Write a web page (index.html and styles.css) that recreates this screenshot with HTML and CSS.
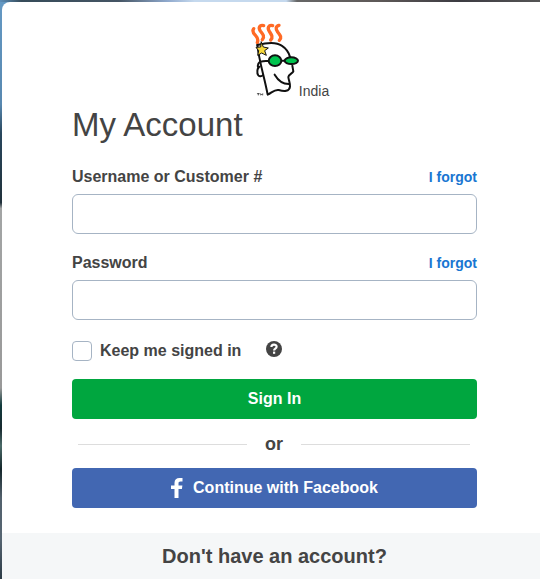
FILE: index.html
```html
<!DOCTYPE html>
<html lang="en">
<head>
    <meta charset="UTF-8">
    <meta name="viewport" content="width=device-width, initial-scale=1.0">
    <title>My Account - Sign In</title>
    <link rel="stylesheet" href="styles.css">
</head>
<body>
    <main class="card">
        <div class="card-body">
            <!-- Logo -->
            <div class="logo">
                <svg class="logo-face" viewBox="51 36 153 228" fill="none" stroke="#111" stroke-width="6" stroke-linecap="round" stroke-linejoin="round" aria-hidden="true">
                    <g stroke="#ff6a25" stroke-width="10">
                        <path d="M68 56C62 64 67 70 74 77C82 85 82 90 79 98"/>
                        <path d="M98 47C86 44 81 53 88 63C96 73 102 80 94 89"/>
                        <path d="M125 47C113 44 108 53 115 64C122 75 127 82 119 90"/>
                        <path d="M144 46C134 49 133 56 140 66C149 77 153 83 145 91"/>
                    </g>
                    <path d="M79 105C110 97 136 95 152 107C166 116 174 128 178 143"/>
                    <path d="M79 105C84 153 101 204 110 254C124 247 130 238 143 240C160 245 175 245 177 230C178 221 173 211 172 201C173 193 185 190 187 184L184 167"/>
                    <path d="M131 194C140 209 151 222 173 222"/>
                    <path d="M112 153C98 152 86 153 82 161C80 165 80 170 82 175M86 170C78 173 77 190 82 196C86 200 92 199 95 196M151 152H160"/>
                    <ellipse cx="132" cy="152" rx="19" ry="16" fill="#00c34e"/>
                    <ellipse cx="181" cy="152" rx="20" ry="10" fill="#00c34e"/>
                    <path d="M91 96L97 111L112 114L101 122L106 136L92 129L80 136L83 122L75 112L88 111Z" fill="#f8d93b" stroke-width="3"/>
                    <path d="M79 251H85M82 251V255M89 255V251L92 254L95 251V255" stroke-width="2"/>
                </svg>
                <span class="logo-country">India</span>
            </div>

            <h1>My Account</h1>

            <!-- Sign in form -->
            <form>
                <div class="field">
                    <div class="field-head">
                        <label for="username">Username or Customer #</label>
                        <a href="#">I forgot</a>
                    </div>
                    <input class="form-control" type="text" id="username">
                </div>
                <div class="field">
                    <div class="field-head">
                        <label for="password">Password</label>
                        <a href="#">I forgot</a>
                    </div>
                    <input class="form-control" type="password" id="password">
                </div>

                <div class="remember">
                    <input type="checkbox" id="remember">
                    <label for="remember">Keep me signed in</label>
                    <button type="button" class="help" aria-label="Help">
                        <svg viewBox="0 0 16 16" aria-hidden="true">
                            <circle cx="8" cy="8" r="8" fill="#444"/>
                            <path d="M5.4 6C5.4 2.8 10.6 2.8 10.6 5.8C10.6 7.8 8.1 7.5 8.1 9.4" fill="none" stroke="#fff" stroke-width="2.2"/>
                            <rect x="7" y="10.6" width="2.2" height="2.2" fill="#fff"/>
                        </svg>
                    </button>
                </div>

                <button type="submit" class="btn btn-signin">Sign In</button>
                <div class="divider">or</div>
                <button type="button" class="btn btn-facebook">
                    <svg viewBox="0 0 12 20" aria-hidden="true">
                        <path d="M3.5 20V11H0V7.5H3.5V5C3.5 1.7 5.4 0 8.5 0H11.5V3.5H9.5C8 3.5 7.5 4.2 7.5 5.4V7.5H11.4L10.9 11H7.5V20Z" fill="#fff"/>
                    </svg>
                    Continue with Facebook
                </button>
            </form>
        </div>

        <div class="card-footer">
            <h2>Don't have an account?</h2>
        </div>
    </main>
</body>
</html>
```

FILE: styles.css
```css
* {
    box-sizing: border-box;
}

body {
    margin: 0;
    padding: 2px 0 0 2px;
    min-height: 100vh;
    display: flex;
    font-family: "Liberation Sans", Arial, sans-serif;
    font-size: 16px;
    line-height: 24px;
    color: #444;
    background:
        linear-gradient(90deg, #5b8db8 0, #364b59 4%, #455564 22%, #8fa9cd 31%, #c5d9ee 36%, #c5d9ee 53%, #666 55%, #5e5958 70%, #3c3b42 85%, #555 100%) top / 100% 2px no-repeat,
        linear-gradient(#6499c4 0, #5888b0 18%, #29475d 23%, #20313b 35%, #a3a5a5 36%, #999 67%, #123b3d 70%, #17292f 74%, #4c6b69 77%, #14262b 81%, #53616d 86%, #566572 93%, #2c3b46 100%);
}

.card {
    flex: 1;
    display: flex;
    flex-direction: column;
    background: #fff;
    border-top-left-radius: 8px;
    overflow: hidden;
}

.card-body {
    padding: 20px 63px 25px 70px;
}

/* Logo */
.logo {
    display: flex;
    align-items: flex-end;
    justify-content: center;
    padding-left: 28px;
}

.logo-face {
    width: 51px;
    height: 76px;
}

.logo-country {
    font-size: 14px;
    line-height: 14px;
}

h1 {
    margin: 7px 0 20px;
    font-size: 33px;
    line-height: 40px;
    font-weight: normal;
}

/* Form */
.field {
    margin-bottom: 17px;
}

.field-head {
    display: flex;
    justify-content: space-between;
    margin-bottom: 5px;
}

label {
    font-weight: bold;
}

a {
    color: #1976d2;
    font-size: 14px;
    font-weight: bold;
    text-decoration: none;
}

.form-control {
    display: block;
    width: 100%;
    height: 40px;
    padding: 8px 12px;
    border: 1px solid #a6b4c4;
    border-radius: 6px;
    font: inherit;
    background: #fff;
}

.remember {
    display: flex;
    align-items: center;
    margin: 19px 0 16px;
}

.remember input {
    appearance: none;
    width: 20px;
    height: 20px;
    margin: 0 8px 0 0;
    border: 1px solid #a6b4c4;
    border-radius: 4px;
    background: #fff;
}

.help {
    margin-left: 25px;
    padding: 0 0 4px;
    border: 0;
    background: none;
    display: flex;
}

.help svg {
    width: 16px;
    height: 16px;
}

.btn {
    display: flex;
    align-items: center;
    justify-content: center;
    gap: 10px;
    width: 100%;
    height: 40px;
    border: 0;
    border-radius: 4px;
    font: inherit;
    font-weight: bold;
    color: #fff;
}

.btn-signin {
    background: #00a63f;
}

.btn-facebook {
    background: #4267b2;
}

.btn-facebook svg {
    width: 12px;
    height: 20px;
}

.divider {
    display: flex;
    align-items: center;
    gap: 18px;
    padding: 13px 7px 12px 6px;
    font-size: 18px;
    font-weight: bold;
}

.divider::before,
.divider::after {
    content: "";
    flex: 1;
    height: 1px;
    background: #ddd;
}

/* Footer */
.card-footer {
    flex: 1;
    padding: 11px 63px 0 70px;
    text-align: center;
    background: #f5f7f8;
}

h2 {
    margin: 0;
    font-size: 20px;
    line-height: 24px;
}
```
